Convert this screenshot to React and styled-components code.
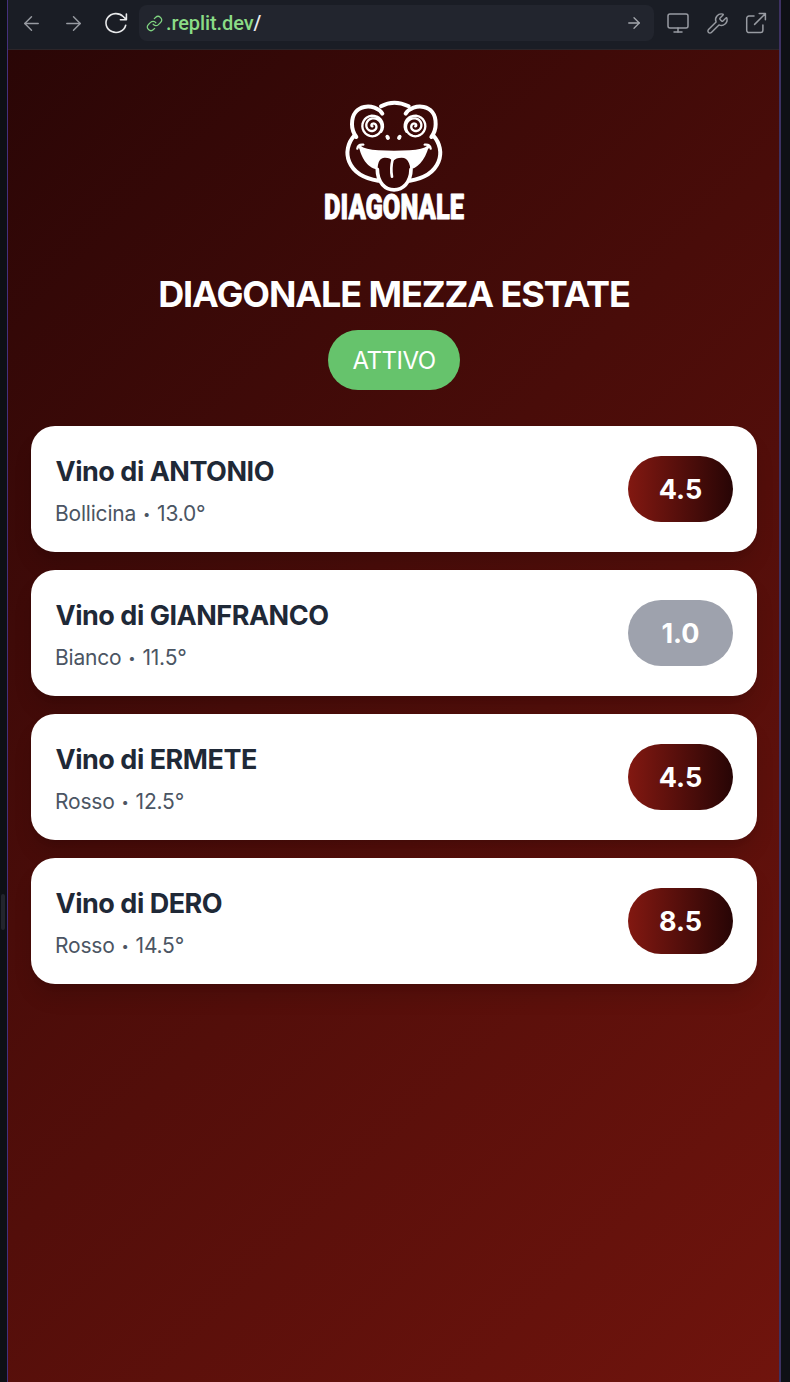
import React from "react";
import styled, { createGlobalStyle } from "styled-components";
import { ArrowLeft, ArrowRight, Link, Monitor, Wrench } from "lucide-react";

const GlobalStyle = createGlobalStyle`
  * { box-sizing: border-box; }
  body { margin: 0; background: #0e1015; font-family: Inter, "Liberation Sans", sans-serif; }
`;

const Workspace = styled.div`
  display: flex;
  height: 1382px;
  background: #0e1015;
`;

const Gutter = styled.div`
  width: 7px;
  flex: none;
  display: flex;
  align-items: flex-start;
  padding: 894px 0 0 1px;
`;

const DragHandle = styled.div`
  width: 4px;
  height: 36px;
  border-radius: 2px;
  background: #23252d;
`;

const Pane = styled.div`
  width: 774px;
  flex: none;
  display: flex;
  flex-direction: column;
  border-left: 1px solid #44307c;
  border-right: 2px solid #3d3162;
`;

const Toolbar = styled.header`
  height: 50px;
  flex: none;
  display: flex;
  align-items: flex-start;
  padding-top: 5px;
  background: #1a1d25;
  border-bottom: 1px solid #2c2529;
  color: #989ba2;
`;

const ToolButton = styled.button`
  display: grid;
  place-items: center;
  width: ${(p) => p.$width}px;
  height: 36px;
  margin: 0;
  padding: 0;
  border: 0;
  background: none;
  color: ${(p) => p.$color || "inherit"};
`;

const AddressBar = styled.div`
  width: 515px;
  height: 36px;
  display: flex;
  align-items: center;
  padding: 0 11px 0 7px;
  border-radius: 8px;
  background: #22252e;
  color: #7fd380;
`;

const Url = styled.span`
  flex: 1;
  margin-left: 3px;
  font: 500 20px/36px Roboto, "Noto Sans", sans-serif;
  letter-spacing: -0.1px;
  color: #8bdc86;
`;

const Slash = styled.span`
  color: #e8e9ed;
`;

const Screen = styled.main`
  flex: 1;
  display: flex;
  flex-direction: column;
  align-items: center;
  padding: 40px 22px 0 23px;
  background: linear-gradient(135deg, #2a0606 0%, #490c09 42%, #70140d 100%);
`;

const Title = styled.h1`
  margin: 42px 0 0;
  height: 45px;
  font-size: 36px;
  line-height: 45px;
  font-weight: 700;
  letter-spacing: ${(p) => p.$tracking}px;
  color: #fff;
  white-space: nowrap;
`;

const Status = styled.div`
  width: 132px;
  height: 60px;
  margin-top: 13px;
  border-radius: 30px;
  background: #66c36c;
  color: #fff;
  font-size: 24px;
  line-height: 61px;
  letter-spacing: -0.5px;
  text-align: center;
`;

const WineList = styled.ul`
  align-self: stretch;
  display: flex;
  flex-direction: column;
  gap: 18px;
  margin: 36px 0 0;
  padding: 0;
  list-style: none;
`;

const WineCard = styled.li`
  height: 126px;
  display: flex;
  align-items: center;
  justify-content: space-between;
  padding: 0 24px;
  border-radius: 24px;
  background: #fff;
  box-shadow: 0 15px 22px -4px rgba(0, 0, 0, 0.13), 0 6px 9px -6px rgba(0, 0, 0, 0.13);
`;

const WineText = styled.div`
  padding: 4px 0 0;
`;

const WineName = styled.h2`
  margin: 0 0 0 0.5px;
  font-size: 27px;
  line-height: 42px;
  font-weight: 700;
  letter-spacing: ${(p) => p.$tracking}px;
  color: #1f2937;
`;

const WineMeta = styled.p`
  display: flex;
  align-items: center;
  margin: 3px 0 0;
  font-size: 21px;
  line-height: 36px;
  letter-spacing: ${(p) => p.$tracking}px;
  color: #4b5563;
`;

const Bullet = styled.span`
  width: 21px;
  font-size: 13px;
  text-align: center;
`;

const Score = styled.div`
  width: 105px;
  height: 66px;
  border-radius: 33px;
  background: ${(p) => (p.$muted ? "#9ea2ad" : "linear-gradient(90deg, #821811, #270505)")};
  color: #fff;
  font-size: 27px;
  line-height: 67px;
  font-weight: 700;
  text-align: center;
`;

const Reload = () => (
  <svg width="24" height="24" viewBox="0 0 24 24" fill="none" stroke="currentColor" strokeWidth="1.6" strokeLinecap="round" strokeLinejoin="round">
    <path d="M21.7 14.2A10 9.4 0 1 1 19.2 5.5L22.4 8.6M22.4 3v5.8h-6" />
  </svg>
);

const OpenExternal = () => (
  <svg width="22" height="22" viewBox="0 0 22 22" fill="none" stroke="currentColor" strokeWidth="1.5" strokeLinecap="round" strokeLinejoin="round">
    <path d="M9 4H4a2.3 2.3 0 0 0-2.3 2.3v12A2.3 2.3 0 0 0 4 20.6h11.6a2.3 2.3 0 0 0 2.3-2.3V13M14.2 1.6h6.2v6.2M20.4 1.6L9.6 12.4" />
  </svg>
);

const LogoFrame = styled.svg`
  display: block;
  margin-left: 1px;
`;

// Hypnotic eye: an Archimedean spiral closing into an outer ring.
const spiral = (cx, cy, dir) => {
  const points = [];
  for (let turn = 0; turn <= 2.75; turn += 0.04) {
    const r = Math.min(1 + 16 * turn, 31);
    const a = Math.PI * (2 * turn + 0.75);
    points.push(`${(cx + dir * r * Math.cos(a)).toFixed(1)} ${(cy + r * Math.sin(a)).toFixed(1)}`);
  }
  return `M${points.join("L")}`;
};

const FrogLogo = () => (
  <LogoFrame width="170" height="140" viewBox="0 0 510 420" fill="none" stroke="#fff" strokeWidth="12" strokeLinecap="round" strokeLinejoin="round" role="img" aria-label="Diagonale">
    <path d="M213 49Q252 27 296 49" />
    <path d="M217 71C195 38 125 40 126 103Q126 124 139 141M287 71C309 38 379 40 377 103Q377 124 364 141" />
    <path d="M133 137C93 181 108 257 205 272M370 137C410 181 395 257 299 272" />
    <path d="M147 171C158 220 184 237 207 239L207 262L297 262L297 239C320 237 345 212 356 171Q340 184 299 185Q252 188 205 185Q164 184 147 171Z" fill="#fff" stroke="none" />
    <path d="M148 170Q164 184 205 185Q252 188 299 185Q340 184 356 170" strokeWidth="9" />
    <path d="M142 176Q144 162 160 164M344 164Q360 162 362 176" strokeWidth="7" />
    <path d="M205 268C198 216 209 203 226 203Q240 203 249 213Q258 203 275 203C295 203 306 225 299 266C294 312 210 312 205 268Z" fill="#390807" stroke="none" />
    <path d="M202 238C202 320 302 320 303 238" strokeWidth="11" />
    <path d="M248 207Q241 237 246 260" strokeWidth="8" />
    <ellipse cx="233" cy="142" rx="4" ry="6" transform="rotate(-32 233 142)" fill="#fff" strokeWidth="4" />
    <ellipse cx="268" cy="142" rx="4" ry="6" transform="rotate(32 268 142)" fill="#fff" strokeWidth="4" />
    <path d={spiral(188, 108, 1)} strokeWidth="7" />
    <path d={spiral(315, 108, -1)} strokeWidth="7" />
    <g transform="translate(42 388) scale(1 1.38)">
      <text x="0" y="0" textLength="420" lengthAdjust="spacingAndGlyphs" fill="#fff" stroke="#fff" strokeWidth="2" fontFamily="Roboto, sans-serif" fontWeight="900" fontSize="75">DIAGONALE</text>
    </g>
  </LogoFrame>
);

const wines = [
  { owner: "ANTONIO", kind: "Bollicina", degrees: "13.0", score: "4.5" },
  { owner: "GIANFRANCO", kind: "Bianco", degrees: "11.5", score: "1.0", muted: true },
  { owner: "ERMETE", kind: "Rosso", degrees: "12.5", score: "4.5" },
  { owner: "DERO", kind: "Rosso", degrees: "14.5", score: "8.5" },
];

export default function App() {
  return (
    <Workspace>
      <GlobalStyle />
      <Gutter><DragHandle /></Gutter>
      <Pane>
        <Toolbar>
          <ToolButton $width={46} aria-label="Back"><ArrowLeft size={23} strokeWidth={1.5} /></ToolButton>
          <ToolButton $width={38} aria-label="Forward"><ArrowRight size={23} strokeWidth={1.5} /></ToolButton>
          <ToolButton $width={47} $color="#e8e9eb" aria-label="Reload"><Reload /></ToolButton>
          <AddressBar>
            <Link size={17} strokeWidth={1.7} />
            <Url>.replit.dev<Slash>/</Slash></Url>
            <ArrowRight size={18} strokeWidth={1.7} color="#a5a8ae" />
          </AddressBar>
          <ToolButton $width={48} aria-label="Device"><Monitor size={24} strokeWidth={1.5} /></ToolButton>
          <ToolButton $width={31} aria-label="Developer tools"><Wrench size={23} strokeWidth={1.5} /></ToolButton>
          <ToolButton $width={46} aria-label="Open in new tab"><OpenExternal /></ToolButton>
        </Toolbar>
        <Screen>
          <FrogLogo />
          <Title $tracking={-1.1}>DIAGONALE MEZZA ESTATE</Title>
          <Status>ATTIVO</Status>
          <WineList>
            {wines.map((w) => (
              <WineCard key={w.owner}>
                <WineText>
                  <WineName $tracking={-0.48}>Vino di {w.owner}</WineName>
                  <WineMeta $tracking={-0.2}>{w.kind}<Bullet>•</Bullet>{w.degrees}°</WineMeta>
                </WineText>
                <Score $muted={w.muted}>{w.score}</Score>
              </WineCard>
            ))}
          </WineList>
        </Screen>
      </Pane>
    </Workspace>
  );
}
